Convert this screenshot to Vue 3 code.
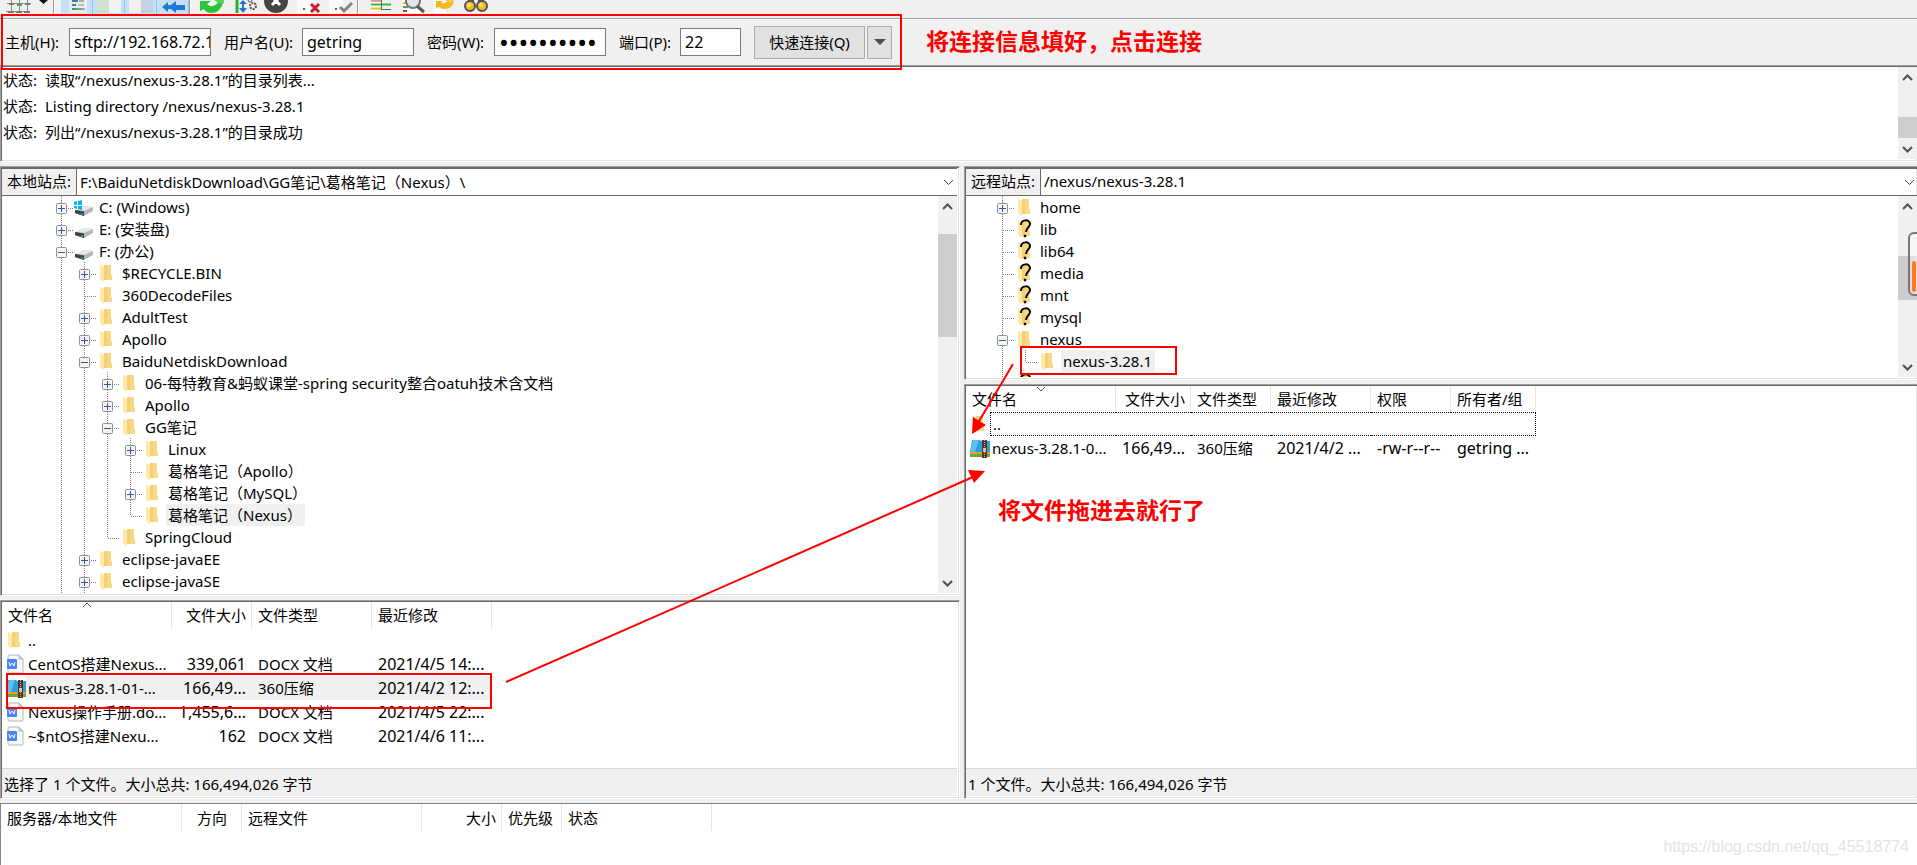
<script setup>
import { h } from 'vue'

const logs = [
  '读取“/nexus/nexus-3.28.1”的目录列表...',
  'Listing directory /nexus/nexus-3.28.1',
  '列出“/nexus/nexus-3.28.1”的目录成功',
]

// guides: one letter per indent level
// | line through, + collapsed, - expanded, t tee, l corner, space = blank
const localTree = [
  { g: '+', icon: 'windrive', name: 'C: (Windows)' },
  { g: '+', icon: 'drive', name: 'E: (安装盘)' },
  { g: '-', icon: 'drive', name: 'F: (办公)' },
  { g: '|+', icon: 'folder', name: '$RECYCLE.BIN' },
  { g: '|t', icon: 'folder', name: '360DecodeFiles' },
  { g: '|+', icon: 'folder', name: 'AdultTest' },
  { g: '|+', icon: 'folder', name: 'Apollo' },
  { g: '|-', icon: 'folder', name: 'BaiduNetdiskDownload' },
  { g: '||+', icon: 'folder', name: '06-每特教育&蚂蚁课堂-spring security整合oatuh技术含文档' },
  { g: '||+', icon: 'folder', name: 'Apollo' },
  { g: '||-', icon: 'folder', name: 'GG笔记' },
  { g: '|||+', icon: 'folder', name: 'Linux' },
  { g: '|||t', icon: 'folder', name: '葛格笔记（Apollo）' },
  { g: '|||+', icon: 'folder', name: '葛格笔记（MySQL）' },
  { g: '|||l', icon: 'folder', name: '葛格笔记（Nexus）', selected: true },
  { g: '||l', icon: 'folder', name: 'SpringCloud' },
  { g: '|+', icon: 'folder', name: 'eclipse-javaEE' },
  { g: '|+', icon: 'folder', name: 'eclipse-javaSE' },
  { g: '||', icon: '', name: '' },
]
const remoteTree = [
  { g: '+', icon: 'folder', name: 'home' },
  { g: 't', icon: 'unknown', name: 'lib' },
  { g: 't', icon: 'unknown', name: 'lib64' },
  { g: 't', icon: 'unknown', name: 'media' },
  { g: 't', icon: 'unknown', name: 'mnt' },
  { g: 't', icon: 'unknown', name: 'mysql' },
  { g: '-', icon: 'folder', name: 'nexus' },
  { g: '|l', icon: 'folder', name: 'nexus-3.28.1', selected: true },
  { g: 't', icon: 'unknown', name: '' },
]

const localCols = [
  { name: '文件名', w: 170, sort: 'up' },
  { name: '文件大小', w: 80, right: true, latin: true },
  { name: '文件类型', w: 120 },
  { name: '最近修改', w: 120, latin: true },
]
const localFiles = [
  { icon: 'folder', cells: ['..', '', '', ''] },
  { icon: 'doc', cells: ['CentOS搭建Nexus...', '339,061', 'DOCX 文档', '2021/4/5 14:...'] },
  { icon: 'zip', cells: ['nexus-3.28.1-01-...', '166,49...', '360压缩', '2021/4/2 12:...'], selected: true },
  { icon: 'doc', cells: ['Nexus操作手册.do...', '1,455,6...', 'DOCX 文档', '2021/4/5 22:...'] },
  { icon: 'doc', cells: ['~$ntOS搭建Nexu...', '162', 'DOCX 文档', '2021/4/6 11:...'] },
]
const remoteCols = [
  { name: '文件名', w: 150, sort: 'down' },
  { name: '文件大小', w: 75, right: true, latin: true },
  { name: '文件类型', w: 80 },
  { name: '最近修改', w: 100, latin: true },
  { name: '权限', w: 80, latin: true },
  { name: '所有者/组', w: 85, latin: true },
]
const remoteFiles = [
  { icon: 'folder', cells: ['..', '', '', '', '', ''], focused: true },
  { icon: 'zip', cells: ['nexus-3.28.1-0...', '166,49...', '360压缩', '2021/4/2 ...', '-rw-r--r--', 'getring ...'] },
]
const queueCols = [
  { name: '服务器/本地文件', w: 181 },
  { name: '方向', w: 60, center: true },
  { name: '远程文件', w: 180 },
  { name: '大小', w: 80, right: true },
  { name: '优先级', w: 60 },
  { name: '状态', w: 150 },
]
const total = (cols) => cols.reduce((sum, c) => sum + c.w, 0) + 'px'

const shapes = {
  folder: [
    ['path', { d: 'M8 3h7v10l1 1v4H8z', fill: '#f3d077' }],
    ['path', { d: 'M11 3h4v10l1 1v4h-5z', fill: '#f7d983' }],
    ['path', { d: 'M4 3h1l3 2v14l-1 1-3-3z', fill: '#ffe9a6' }],
  ],
  drive: [
    ['path', { d: 'M2 14l8-4h7l3 1-8 4z', fill: '#e6e7e8' }],
    ['path', { d: 'M2 14l9 1v5l-9-3z', fill: '#5b5f5e' }],
    ['path', { d: 'M2 14l9 2v4l-9-3z', fill: '#3f4443' }],
    ['path', { d: 'M11 15l9-4v4l-9 5z', fill: '#b4b7b8' }],
    ['path', { d: 'M8 18h2', stroke: '#6be06b' }],
  ],
  flag: [
    ['path', { d: 'M1 6l3-1v4H1zM5 5l4-1v5H5zM1 10h3v3l-3-1zM5 10h4v4l-4-1z', fill: '#00b7f0' }],
  ],
  mark: [
    ['path', { d: 'M7 7c0-6 9-6 9-1 0 3-4 4-4 8', fill: 'none', stroke: '#000', 'stroke-width': 2 }],
    ['circle', { cx: 11, cy: 18, r: 1, fill: '#000', stroke: '#000' }],
  ],
  doc: [
    ['path', { d: 'M7 2h10l4 4v13q0 1-1 1H7q-1 0-1-1V3q0-1 1-1z', fill: '#f8f9fb', stroke: '#b4b6ba' }],
    ['path', { d: 'M17 2v4h4z', fill: '#d8dadd', stroke: '#b4b6ba' }],
    ['rect', { x: 5, y: 6, width: 10, height: 10, rx: 1, fill: '#4a84f0' }],
    ['path', { d: 'M7 9l1 4 2-3 2 3 1-4', fill: 'none', stroke: '#fff' }],
  ],
  zip: [
    ['path', { d: 'M4 13h20v7H4z', fill: '#6aa72d' }],
    ['path', { d: 'M4 13h20v4H4z', fill: '#f39a28' }],
    ['path', { d: 'M6 3h8l1 1h9v11H4z', fill: '#2d9fe0' }],
    ['path', { d: 'M7 3h6L9 15H4z', fill: '#5cc0f2' }],
    ['rect', { x: 16, y: 3, width: 5, height: 18, fill: '#54362a' }],
    ['path', { d: 'M18.500 3v8M18.500 15v5', stroke: '#c9b28a', 'stroke-dasharray': '1 1' }],
    ['rect', { x: 17, y: 11, width: 3, height: 4, fill: '#d4c29c' }],
  ],
}
const FileIcon = (props) => {
  const parts = {
    windrive: [...shapes.drive, ...shapes.flag],
    unknown: [...shapes.folder, ...shapes.mark],
  }[props.name] || shapes[props.name] || []
  return h(
    'svg',
    { width: 24, height: 22, viewBox: `${props.shift || 0} 0 24 22`, 'aria-hidden': 'true' },
    parts.map(([t, a]) => h(t, a)),
  )
}
FileIcon.props = ['name', 'shift']

const Guide = (props) => {
  const k = props.kind
  const dot = { stroke: '#808080', 'stroke-dasharray': '1 1', fill: 'none' }
  const out = []
  if (k !== ' ') out.push(h('path', { d: k === 'l' ? 'M11.5 0V12' : 'M11.5 0V22', ...dot }))
  if ('+-tl'.includes(k)) out.push(h('path', { d: 'M12 12.5H24', ...dot }))
  if ('+-'.includes(k)) {
    out.push(h('rect', { x: 6.5, y: 7.5, width: 10, height: 10, rx: 1, fill: '#f4f4f4', stroke: '#919191' }))
    out.push(h('path', { d: k === '+' ? 'M8 12.5H15M11.5 9V16' : 'M8 12.5H15', stroke: '#3a57a5' }))
  }
  return h('svg', { width: 23, height: 22, viewBox: '0 0 23 22', 'aria-hidden': 'true' }, out)
}
Guide.props = ['kind']

const ScrollBar = (props) =>
  h('div', { class: 'scrollbar' }, [
    h('svg', { width: 19, height: 20, viewBox: '0 0 19 20' }, [h('path', { d: 'M5 13l4.500-4.500 4.500 4.500', fill: 'none', stroke: '#505050', 'stroke-width': 2 })]),
    h('div', { class: 'track' }, [h('div', { class: 'thumb', style: { top: props.top + '%', height: props.size + '%' } })]),
    h('svg', { width: 19, height: 20, viewBox: '0 0 19 20' }, [h('path', { d: 'M5 8l4.500 4.500 4.500-4.500', fill: 'none', stroke: '#505050', 'stroke-width': 2 })]),
  ])
ScrollBar.props = ['top', 'size']
</script>

<template>
  <div class="app">
    <div class="toolbar">
      <button class="tool" aria-label="站点管理器">
        <svg width="32" height="14" viewBox="0 0 32 14">
          <path d="M5 3.500H29M4 11.500H28M9.500 0V13M17.500 0V13M25.500 0V13" stroke="#8b8b8b" stroke-width="1" />
          <path d="M7 3h5v2H7zM15 4h5v2h-5zM23 3h5v2h-5zM6 11h6v2H6zM14 11h6v2h-6zM22 11h6v2h-6z" fill="#777" />
          <path d="M16 5h3v1h-3zM12 11h3v1h-3z" fill="#39c639" />
        </svg>
      </button>
      <button class="drop" aria-label="展开站点">
        <svg width="19" height="14" viewBox="0 0 19 14"><path d="M5 0h9L9.500 4z" fill="#111" /></svg>
      </button>
      <i class="sep"></i>
      <button class="tool on" aria-label="消息日志">
        <svg width="32" height="14" viewBox="0 0 32 14">
          <path d="M8 0h18v13H8z" fill="#ececec" />
          <path d="M11 1h6M11 5h4M11 9h5" stroke="#3877b8" stroke-width="2" />
          <path d="M17 5h6M12 9h9" stroke="#55b94f" stroke-width="1" />
          <path d="M18 1h5M16 9h8" stroke="#667" stroke-width="1" />
        </svg>
      </button>
      <button class="tool on" aria-label="本地目录树">
        <svg width="32" height="14" viewBox="0 0 32 14">
          <path d="M4 0h24v13H4z" fill="#f2f2f2" /><path d="M4 0h12v12H4z" fill="#cfe3cd" /><path d="M16 12H4" stroke="#b4cdb2" />
        </svg>
      </button>
      <button class="tool on" aria-label="远程目录树">
        <svg width="32" height="14" viewBox="0 0 32 14">
          <path d="M4 0h24v13H4z" fill="#f0f0f0" /><path d="M16 0h12v12H16z" fill="#c3d3e6" /><path d="M28 12H16" stroke="#a7b8cc" />
        </svg>
      </button>
      <button class="tool on" aria-label="传输队列">
        <svg width="32" height="14" viewBox="0 0 32 14">
          <path d="M5 7l6-5v3h3l5-4v4h9v5h-9v3l-5-4h-3v3z" fill="#1f7ad6" />
        </svg>
      </button>
      <i class="sep"></i>
      <button class="tool" aria-label="刷新">
        <svg width="32" height="14" viewBox="0 0 32 14">
          <path d="M3 1h11l-4 3q5 5 11-1h5q-3 10-12 10-5 0-7-4l-4 2z" fill="#2bc43a" />
          <path d="M17 0h10v3h-6z" fill="#55d85b" />
        </svg>
      </button>
      <button class="tool" aria-label="处理队列">
        <svg width="32" height="14" viewBox="0 0 32 14">
          <path d="M8 0v13" stroke="#25b52d" stroke-width="3" /><path d="M14 1v11" stroke="#2277cc" stroke-width="2" />
          <path d="M10 8h8l-4 5zM10 4h8l-4-4z" fill="#2277cc" />
          <circle cx="24" cy="6" r="3" fill="none" stroke="#555" stroke-width="2" stroke-dasharray="2 1" />
          <circle cx="21" cy="0" r="2" fill="none" stroke="#555" stroke-width="1" />
        </svg>
      </button>
      <button class="tool" aria-label="取消">
        <svg width="32" height="14" viewBox="0 0 32 14">
          <circle cx="15" cy="1" r="12" fill="#454545" /><path d="M11 5l4-4 4 4M15 1l-3-3M15 1l3-3" stroke="#fff" stroke-width="3" fill="none" />
        </svg>
      </button>
      <button class="tool" aria-label="断开">
        <svg width="32" height="14" viewBox="0 0 32 14">
          <path d="M4 0h14v13H4z" fill="#f9f9f9" /><circle cx="11" cy="9" r="1" fill="#333" />
          <path d="M18 4l8 8M26 4l-8 8" stroke="#c3202c" stroke-width="3" />
        </svg>
      </button>
      <button class="tool" aria-label="重新连接">
        <svg width="32" height="14" viewBox="0 0 32 14">
          <path d="M4 0h14v13H4z" fill="#f9f9f9" /><circle cx="11" cy="9" r="1" fill="#333" />
          <path d="M15 7l4 4 8-8" stroke="#828282" stroke-width="3" fill="none" />
        </svg>
      </button>
      <i class="sep"></i>
      <button class="tool" aria-label="过滤器">
        <svg width="32" height="14" viewBox="0 0 32 14">
          <path d="M6 0h10v11H6z" fill="#fff" />
          <path d="M6 1h10" stroke="#c33" stroke-width="1" /><path d="M6 4.500h20" stroke="#2fbd37" stroke-width="2" />
          <path d="M6 8.500h10" stroke="#e5bb20" stroke-width="2" /><path d="M16.500 0v10M17 9.500h9" stroke="#666" />
        </svg>
      </button>
      <button class="tool" aria-label="目录比较">
        <svg width="32" height="14" viewBox="0 0 32 14">
          <path d="M6 0h17v13H6z" fill="#fff" /><path d="M6 3h4" stroke="#e5bb20" stroke-width="2" />
          <path d="M6 7h5" stroke="#2fbd37" stroke-width="2" /><path d="M6 11h4" stroke="#c33" stroke-width="2" />
          <circle cx="16" cy="1" r="7" fill="#dce6ec" stroke="#777" stroke-width="2" /><path d="M20 6l7 6" stroke="#555" stroke-width="3" />
        </svg>
      </button>
      <button class="tool" aria-label="同步浏览">
        <svg width="32" height="14" viewBox="0 0 32 14">
          <path d="M4 0h13v13H4z" fill="#fafafa" />
          <path d="M7 1h7l-2 2q5 1 7-3h6q-1 9-10 9-3 0-5-2l-3 1z" fill="#f7b51c" />
          <path d="M16 0h9l-4 3z" fill="#fbc94a" />
        </svg>
      </button>
      <button class="tool" aria-label="搜索">
        <svg width="32" height="14" viewBox="0 0 32 14">
          <path d="M7 0h6v5H7zM17 0h6v5h-6z" fill="#555" />
          <circle cx="9" cy="6" r="5" fill="#f9bb22" stroke="#555" stroke-width="2" /><circle cx="21" cy="6" r="5" fill="#f9bb22" stroke="#555" stroke-width="2" />
          <circle cx="8" cy="5" r="2" fill="#ffe07d" /><circle cx="20" cy="5" r="2" fill="#ffe07d" />
        </svg>
      </button>
    </div>

    <form class="quick" @submit.prevent>
      <label for="host">主机(H):</label>
      <input id="host" class="host" type="text" value="sftp://192.168.72.1" />
      <label for="user">用户名(U):</label>
      <input id="user" class="user" type="text" value="getring" />
      <label for="pass">密码(W):</label>
      <input id="pass" class="pass" type="password" value="0123456789" autocomplete="off" />
      <label for="port">端口(P):</label>
      <input id="port" class="port" type="text" value="22" />
      <div class="connect">
        <button class="go" type="submit">快速连接(Q)</button>
        <button class="more" type="button" aria-label="历史连接">
          <svg width="12" height="6" viewBox="0 0 12 6"><path d="M0 0h12L6 6z" fill="#505050" /></svg>
        </button>
      </div>
    </form>

    <section class="log sunken">
      <div class="lines">
        <p v-for="l in logs" :key="l"><span class="tag">状态:</span>{{ l }}</p>
      </div>
      <ScrollBar :top="58.500" :size="39.600" />
    </section>

    <main class="panes">
      <div class="pane local">
        <section class="sunken site">
          <div class="path">
            <label for="lpath">本地站点:</label>
            <input id="lpath" type="text" value="F:\BaiduNetdiskDownload\GG笔记\葛格笔记（Nexus）\" />
            <button aria-label="展开路径"><svg width="19" height="20" viewBox="0 0 19 20"><path d="M6 8l4.500 4.500L15 8" fill="none" stroke="#444" /></svg></button>
          </div>
          <div class="treewrap">
            <ul class="tree">
              <li v-for="(n, i) in localTree" :key="i">
                <Guide v-for="(k, j) in n.g" :key="j" :kind="k" />
                <FileIcon v-if="n.icon" :name="n.icon" /><span v-if="n.name" :class="{ sel: n.selected }">{{ n.name }}</span>
              </li>
            </ul>
            <ScrollBar :top="5" :size="28.800" />
          </div>
        </section>
        <section class="sunken files">
          <div class="list">
            <table :style="{ width: total(localCols) }">
              <colgroup><col v-for="c in localCols" :key="c.name" :style="{ width: c.w + 'px' }" /></colgroup>
              <thead>
                <tr>
                  <th v-for="c in localCols" :key="c.name" :class="{ right: c.right }">{{ c.name }}
                    <svg v-if="c.sort" class="sort" width="10" height="6" viewBox="0 0 10 6"><path d="M1 5l4-4 4 4" fill="none" stroke="#555" /></svg>
                  </th>
                </tr>
              </thead>
              <tbody>
                <tr v-for="f in localFiles" :key="f.cells[0]" :class="{ selected: f.selected }">
                  <td v-for="(c, i) in f.cells" :key="i" :class="{ right: localCols[i].right, latin: localCols[i].latin, name: i === 0 }">
                    <div v-if="i === 0" class="entry"><FileIcon :name="f.icon" :shift="f.icon === 'folder' ? -2 : 0" /><span>{{ c }}</span></div>
                    <template v-else>{{ c }}</template>
                  </td>
                </tr>
              </tbody>
            </table>
          </div>
          <footer>选择了 1 个文件。大小总共: 166,494,026 字节</footer>
        </section>
      </div>

      <div class="pane remote">
        <section class="sunken site">
          <div class="path">
            <label for="rpath">远程站点:</label>
            <input id="rpath" type="text" value="/nexus/nexus-3.28.1" />
            <button aria-label="展开路径"><svg width="19" height="20" viewBox="0 0 19 20"><path d="M7 8l4.500 4.500L16 8" fill="none" stroke="#444" /></svg></button>
          </div>
          <div class="treewrap">
            <ul class="tree">
              <li v-for="(n, i) in remoteTree" :key="i">
                <Guide v-for="(k, j) in n.g" :key="j" :kind="k" />
                <FileIcon :name="n.icon" /><span v-if="n.name" :class="{ sel: n.selected }">{{ n.name }}</span>
              </li>
            </ul>
            <ScrollBar :top="28.200" :size="31.700" />
          </div>
        </section>
        <section class="sunken files">
          <div class="list">
            <table :style="{ width: total(remoteCols) }">
              <colgroup><col v-for="c in remoteCols" :key="c.name" :style="{ width: c.w + 'px' }" /></colgroup>
              <thead>
                <tr>
                  <th v-for="c in remoteCols" :key="c.name" :class="{ right: c.right }">{{ c.name }}
                    <svg v-if="c.sort" class="sort" width="10" height="6" viewBox="0 0 10 6"><path d="M1 1l4 4 4-4" fill="none" stroke="#555" /></svg>
                  </th>
                </tr>
              </thead>
              <tbody>
                <tr v-for="f in remoteFiles" :key="f.cells[0]" :class="{ focused: f.focused }">
                  <td v-for="(c, i) in f.cells" :key="i" :class="{ right: remoteCols[i].right, latin: remoteCols[i].latin, name: i === 0 }">
                    <div v-if="i === 0" class="entry"><FileIcon :name="f.icon" :shift="f.icon === 'folder' ? -2 : 0" /><span>{{ c }}</span></div>
                    <template v-else>{{ c }}</template>
                  </td>
                </tr>
              </tbody>
            </table>
          </div>
          <footer>1 个文件。大小总共: 166,494,026 字节</footer>
        </section>
      </div>
    </main>

    <section class="queue">
      <table :style="{ width: total(queueCols) }">
        <colgroup><col v-for="c in queueCols" :key="c.name" :style="{ width: c.w + 'px' }" /></colgroup>
        <thead>
          <tr><th v-for="c in queueCols" :key="c.name" :class="{ right: c.right, center: c.center }">{{ c.name }}</th></tr>
        </thead>
      </table>
    </section>

    <div class="gauge"><i></i></div>

    <div class="notes">
      <div class="frame f-quick"></div>
      <div class="frame f-file"></div>
      <div class="frame f-dir"></div>
      <p class="note n-connect">将连接信息填好，点击连接</p>
      <p class="note n-drag">将文件拖进去就行了</p>
      <svg class="arrows" width="1200" height="800" viewBox="0 0 1200 800">
        <path d="M1013 364L978 423M506 682L973 477" stroke="#f00" stroke-width="2" />
        <path d="M972 434l1-17 13 8zM985 471l-17-1 6 13z" fill="#f00" />
      </svg>
      <p class="mark">https://blog.csdn.net/qq_45518774</p>
    </div>
  </div>
</template>

<style>
body {
  margin: 0;
  overflow: hidden;
}
</style>

<style scoped>
.app {
  position: relative;
  display: flex;
  flex-direction: column;
  height: 100vh;
  overflow: hidden;
  background: #f0f0f0;
  color: #000;
  font: 15px/22px "Noto Sans", "Noto Sans CJK SC", sans-serif;
}
.app * {
  box-sizing: border-box;
}
p,
ul {
  margin: 0;
  padding: 0;
}
button,
input {
  font: inherit;
  color: inherit;
  border: 0;
  border-radius: 0;
  padding: 0;
  margin: 0;
  outline: 0;
}
svg {
  display: block;
  flex: none;
}

.toolbar {
  display: flex;
  height: 14px;
  padding-left: 2px;
  flex: none;
}
.tool,
.drop {
  flex: none;
  width: 32px;
  background: none;
}
.drop {
  width: 19px;
}
.tool.on {
  background: #c5dff4;
  border-right: 1px solid #92c6f3;
}
.tool.on svg {
  margin-right: -1px;
}
.sep {
  flex: none;
  width: 8px;
  border-left: 1px solid #999;
  border-right: 6px solid transparent;
  background: #fff content-box;
}

.quick {
  display: flex;
  align-items: center;
  flex: none;
  height: 47px;
  margin-top: 4px;
  padding-left: 5px;
  border-top: 1px solid #a0a0a0;
  box-shadow: inset 0 1px #fff;
}
.quick label {
  width: 64px;
  white-space: nowrap;
}
.quick input {
  height: 28px;
  padding: 0 0 0 4px;
  border: 1px solid #7a7a7a;
  background: #fff;
  margin-right: 13px;
  font-size: 16px;
}
.quick label[for="user"] {
  width: 78px;
}
.quick label[for="pass"] {
  width: 67px;
}
.quick label[for="port"] {
  width: 61px;
}
.quick .host {
  width: 142px;
}
.quick .user {
  width: 112px;
}
.quick .pass {
  width: 112px;
  font-size: 26px;
}
.quick .port {
  width: 61px;
}
.connect {
  display: flex;
  gap: 2px;
}
.connect button {
  height: 33px;
  background: #e1e1e1;
  border: 1px solid #adadad;
}
.connect .go {
  width: 111px;
}
.connect .more {
  width: 25px;
  display: grid;
  place-items: center;
}

.sunken {
  border: 1px solid;
  border-color: #a0a0a0 #fff #fff #a0a0a0;
  box-shadow: inset 1px 1px #696969, inset -1px -1px #e3e3e3;
  padding: 1px 2px 2px 1px;
  background: #fff;
  display: flex;
  min-width: 0;
  min-height: 0;
}
.log {
  height: 97px;
  flex: none;
  padding-right: 0;
  border-right: 0;
}
.lines {
  flex: 1;
  padding-left: 1px;
}
.lines p {
  line-height: 26px;
}
.tag {
  display: inline-block;
  width: 42px;
}
:deep(.scrollbar) {
  width: 19px;
  flex: none;
  display: flex;
  flex-direction: column;
  background: #f0f0f0;
}
:deep(.scrollbar svg) {
  display: block;
  flex: none;
}
:deep(.track) {
  flex: 1;
  position: relative;
}
:deep(.thumb) {
  position: absolute;
  left: 0;
  right: 0;
  background: #cdcdcd;
}

.panes {
  flex: 1;
  min-height: 0;
  margin: 4px 0;
  display: grid;
  grid-template-columns: 960fr 953fr;
  gap: 4px;
}
.pane {
  display: grid;
  gap: 4px;
  min-width: 0;
  min-height: 0;
}
.local {
  grid-template-rows: 430fr 199fr;
}
.remote {
  grid-template-rows: 214fr 415fr;
}
.remote .sunken {
  border-right: 0;
  padding-right: 0;
}
.site,
.files {
  flex-direction: column;
}
.path {
  flex: none;
  display: flex;
  height: 28px;
  border-top: 1px solid #696969;
  border-bottom: 1px solid #696969;
}
.path label {
  width: 75px;
  padding-left: 5px;
  background: #f0f0f0;
  border-right: 1px solid #696969;
  line-height: 24px;
  white-space: nowrap;
}
.path input {
  flex: 1;
  min-width: 0;
  height: 24px;
  padding: 0 3px;
  background: #fff;
}
.path button {
  background: none;
  width: 19px;
}
.treewrap {
  flex: 1;
  min-height: 0;
  display: flex;
  overflow: hidden;
}
.tree {
  flex: 1;
  list-style: none;
  padding-left: 48px;
}
.remote .tree {
  padding-left: 25px;
}
.tree li {
  display: flex;
  height: 22px;
}
.tree span {
  padding: 0 3px 0 2px;
  white-space: nowrap;
}
.tree .sel {
  background: #f0f0f0;
}

.list {
  flex: 1;
  min-height: 0;
  overflow: hidden;
}
table {
  table-layout: fixed;
  border-collapse: separate;
  border-spacing: 0;
}
th {
  position: relative;
  height: 26px;
  padding: 0 5px 0 6px;
  border-right: 1px solid #e5e5e5;
  font-weight: 400;
  text-align: left;
  white-space: nowrap;
}
.sort {
  position: absolute;
  top: 0;
  left: calc(50% - 5px);
}
td {
  height: 24px;
  padding: 0 6px;
  white-space: nowrap;
}
.latin {
  font-size: 16px;
}
.right {
  text-align: right;
}
.center {
  text-align: center;
}
td.name {
  padding: 0;
}
.entry {
  display: flex;
  align-items: center;
}
.entry span {
  flex: 1;
  height: 24px;
  padding-left: 2px;
  line-height: 24px;
}
.selected td,
.selected .entry span {
  background: #f0f0f0;
}
.selected td.name {
  background: #fff;
}
.focused td,
.focused .entry span {
  border-top: 1px dotted #000;
  border-bottom: 1px dotted #000;
}
.focused td.name {
  border: 0;
}
.focused .entry span {
  border-left: 1px dotted #000;
  line-height: 22px;
}
.focused td:last-child {
  border-right: 1px dotted #000;
}
footer {
  flex: none;
  height: 28px;
  padding-left: 2px;
  line-height: 30px;
  background: #f0f0f0;
  border-top: 1px solid #d7d7d7;
}

.queue {
  flex: none;
  height: 62px;
  background: #fff;
  border: solid #828790;
  border-width: 1px 0 0 1px;
}
.queue th {
  height: 27px;
}

.gauge {
  position: absolute;
  top: 232px;
  right: -8px;
  width: 17px;
  height: 64px;
  border: 2px solid #777;
  border-radius: 6px;
  background: rgba(255, 255, 255, 0.4);
}
.gauge i {
  position: absolute;
  left: 2px;
  bottom: 2px;
  width: 4px;
  height: 31px;
  border-radius: 2px;
  background: #ff7a22;
}

.notes {
  position: absolute;
  inset: 0;
  pointer-events: none;
}
.frame {
  position: absolute;
  border: 2px solid #f00;
}
.f-quick {
  left: 1px;
  top: 14px;
  width: 901px;
  height: 56px;
}
.f-file {
  left: 6px;
  top: 673px;
  width: 486px;
  height: 36px;
}
.f-dir {
  left: 1020px;
  top: 346px;
  width: 157px;
  height: 29px;
}
.note {
  position: absolute;
  color: #f00;
  font-size: 23px;
  font-weight: 700;
  line-height: 32px;
  white-space: nowrap;
}
.n-connect {
  left: 926px;
  top: 25px;
}
.n-drag {
  left: 998px;
  top: 494px;
}
.arrows {
  position: absolute;
  left: 0;
  top: 0;
}
.mark {
  position: absolute;
  right: 8px;
  bottom: 7px;
  font: 16px/22px "Liberation Sans", sans-serif;
  color: #e4e4e4;
}
</style>
